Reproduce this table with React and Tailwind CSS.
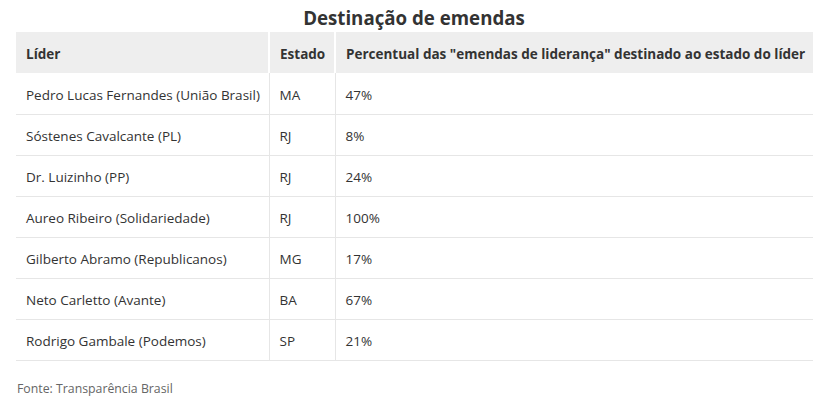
import React from "react";

const rows = [
  ["Pedro Lucas Fernandes (União Brasil)", "MA", "47%"],
  ["Sóstenes Cavalcante (PL)", "RJ", "8%"],
  ["Dr. Luizinho (PP)", "RJ", "24%"],
  ["Aureo Ribeiro (Solidariedade)", "RJ", "100%"],
  ["Gilberto Abramo (Republicanos)", "MG", "17%"],
  ["Neto Carletto (Avante)", "BA", "67%"],
  ["Rodrigo Gambale (Podemos)", "SP", "21%"],
];

export default function App() {
  return (
    <div className="w-[828px] h-[410px] bg-white text-[#333] font-['Open_Sans',sans-serif]">
      <h1 className="h-8 pt-[4px] text-center text-[18.7px] leading-[28px] font-bold text-[#333]">
        Destinação de emendas
      </h1>
      <table className="ml-4 w-[797px] border-collapse text-[13.5px] table-fixed whitespace-nowrap">
        <colgroup>
          <col className="w-[253px]" />
          <col className="w-[66px]" />
          <col className="w-[478px]" />
        </colgroup>
        <thead>
          <tr className="bg-[#eeeeee] h-[41px]">
            <th className="text-left font-bold px-[10px] pt-[3px] border-r-2 border-white">Líder</th>
            <th className="text-left font-bold px-[10px] pt-[3px] border-r-2 border-white">Estado</th>
            <th className="text-left font-bold px-[10px] pt-[3px]">
              Percentual das "emendas de liderança" destinado ao estado do líder
            </th>
          </tr>
        </thead>
        <tbody>
          {rows.map((r, i) => (
            <tr key={i} className="h-[41px] border-b border-[#e6e6e6]">
              <td className="px-[10px] pt-[4px] border-r border-[#e6e6e6]">{r[0]}</td>
              <td className="px-[10px] pt-[4px] border-r border-[#e6e6e6]">{r[1]}</td>
              <td className="px-[10px] pt-[4px]">{r[2]}</td>
            </tr>
          ))}
        </tbody>
      </table>
      <p className="ml-[17px] mt-[20px] text-[12.3px] leading-4 text-[#666]">
        Fonte: Transparência Brasil
      </p>
    </div>
  );
}
